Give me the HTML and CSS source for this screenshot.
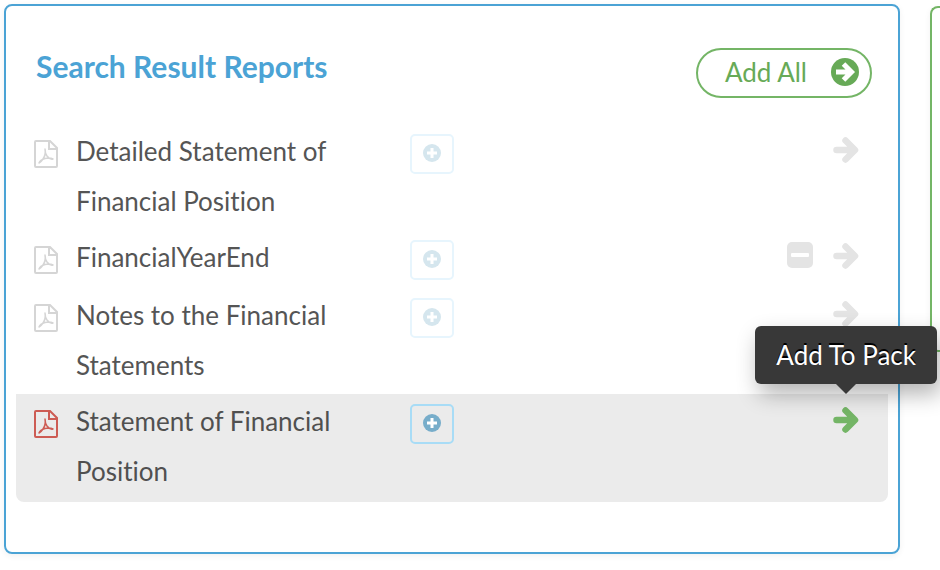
FILE: index.html
```html
<!DOCTYPE html>
<html lang="en">
<head>
    <meta charset="UTF-8">
    <meta name="viewport" content="width=device-width, initial-scale=1.0">
    <title>Search Result Reports</title>
    <link rel="stylesheet" href="styles.css">
</head>
<body>
    <svg class="sprite" aria-hidden="true">
        <symbol id="pdf" viewBox="0 0 24 28">
            <path d="M2 1H16L23 8V26Q23 27 22 27H2Q1 27 1 26V2Q1 1 2 1Z M15 1V9H23" fill="none" stroke="currentColor" stroke-width="2"/>
            <path d="M11 9Q12 15 9 19Q7 22 5 23Q6 20 11 18.500Q16 17.500 19 19Q16 20 13 16Q11 13 11 9Z" fill="none" stroke="currentColor" stroke-width="1.500" stroke-linejoin="round"/>
        </symbol>
        <symbol id="plus" viewBox="0 0 18 18">
            <circle cx="9" cy="9" r="9" fill="currentColor"/>
            <path class="hole" d="M9 4V14M4 9H14" stroke-width="3"/>
        </symbol>
        <symbol id="arrow" viewBox="0 0 26 28">
            <path d="M3.500 14H21M12.500 4.500L22 14L12.500 23.500" fill="none" stroke="currentColor" stroke-width="6.500" stroke-linecap="round" stroke-linejoin="round"/>
        </symbol>
        <symbol id="minus" viewBox="0 0 26 26">
            <rect width="26" height="26" rx="5" fill="currentColor"/>
            <rect x="4" y="11" width="18" height="4" rx="1" fill="#fff"/>
        </symbol>
        <symbol id="circle-arrow" viewBox="0 0 28 28">
            <circle cx="14" cy="14" r="14" fill="currentColor"/>
            <path d="M5 14H20M12.500 6L20.500 14L12.500 22" fill="none" stroke="#fff" stroke-width="5"/>
        </symbol>
    </svg>

    <main class="columns">
        <section class="panel results">
            <header class="panel-header">
                <h2>Search Result Reports</h2>
                <button class="add-all" type="button">Add All <svg class="icon-circle"><use href="#circle-arrow"/></svg></button>
            </header>
            <ul class="reports">
                <li class="report">
                    <svg class="icon-pdf"><use href="#pdf"/></svg>
                    <span class="name">Detailed Statement of Financial Position</span>
                    <button class="more" type="button" aria-label="Details"><svg class="icon-plus"><use href="#plus"/></svg></button>
                    <div class="actions">
                        <button class="action" type="button" aria-label="Add To Pack"><svg class="icon-arrow"><use href="#arrow"/></svg></button>
                    </div>
                </li>
                <li class="report">
                    <svg class="icon-pdf"><use href="#pdf"/></svg>
                    <span class="name">FinancialYearEnd</span>
                    <button class="more" type="button" aria-label="Details"><svg class="icon-plus"><use href="#plus"/></svg></button>
                    <div class="actions">
                        <button class="action" type="button" aria-label="Remove"><svg class="icon-minus"><use href="#minus"/></svg></button>
                        <button class="action" type="button" aria-label="Add To Pack"><svg class="icon-arrow"><use href="#arrow"/></svg></button>
                    </div>
                </li>
                <li class="report">
                    <svg class="icon-pdf"><use href="#pdf"/></svg>
                    <span class="name">Notes to the Financial Statements</span>
                    <button class="more" type="button" aria-label="Details"><svg class="icon-plus"><use href="#plus"/></svg></button>
                    <div class="actions">
                        <button class="action" type="button" aria-label="Add To Pack"><svg class="icon-arrow"><use href="#arrow"/></svg></button>
                    </div>
                </li>
                <li class="report active">
                    <svg class="icon-pdf"><use href="#pdf"/></svg>
                    <span class="name">Statement of Financial Position</span>
                    <button class="more" type="button" aria-label="Details"><svg class="icon-plus"><use href="#plus"/></svg></button>
                    <div class="actions">
                        <button class="action" type="button" aria-labelledby="tip"><svg class="icon-arrow"><use href="#arrow"/></svg></button>
                        <span class="tooltip" id="tip" role="tooltip">Add To Pack</span>
                    </div>
                </li>
            </ul>
        </section>
        <section class="panel pack" aria-label="Pack"></section>
    </main>
</body>
</html>
```
FILE: styles.css
```css
* {
    box-sizing: border-box;
}
body {
    margin: 0;
    background-color: #fff;
    color: #555;
    font-family: Lato, "Open Sans", sans-serif;
    font-size: 26px;
    font-variant-ligatures: none;
}
button {
    padding: 0;
    border: 0;
    background: none;
    color: inherit;
    font: inherit;
    cursor: pointer;
}
svg {
    display: block;
}
.sprite {
    position: absolute;
    width: 0;
    height: 0;
}
.columns {
    display: grid;
    grid-template-columns: 1fr 10px;
    align-items: start;
    gap: 30px;
    padding: 4px 0 16px 4px;
}
.panel {
    border: 2px solid #4ba3d5;
    border-radius: 8px;
    box-shadow: 0 2px 6px rgba(0, 0, 0, 0.06);
}
.results {
    padding: 42px 10px 50px;
}
.pack {
    height: 346px;
    margin-top: 2px;
    border-color: #74b566;
    border-right: 0;
    border-radius: 8px 0 0 8px;
}
.panel-header {
    display: flex;
    align-items: flex-start;
    justify-content: space-between;
    padding: 0 16px 0 20px;
}
h2 {
    margin: 0;
    color: #4ba3d5;
    font-size: 30px;
    line-height: 36px;
}
.add-all {
    display: flex;
    align-items: center;
    gap: 24px;
    height: 50px;
    padding: 0 11px 2px 27px;
    border: 2px solid #74b566;
    border-radius: 25px;
    color: #67aa57;
}
.icon-circle {
    width: 28px;
    height: 28px;
}
.reports {
    margin: 26px 0 0;
    padding: 0;
    list-style: none;
}
.report {
    display: grid;
    grid-template-columns: 24px 300px 44px 1fr;
    align-items: start;
    min-height: 58px;
    padding: 2px 29px 4px 18px;
}
.icon-pdf {
    width: 24px;
    height: 28px;
    margin-top: 14px;
    color: #d5d5d5;
}
.name {
    padding: 0 20px 0 18px;
    line-height: 50px;
}
.more {
    display: grid;
    place-items: center;
    width: 44px;
    height: 40px;
    margin-top: 8px;
    margin-left: 52px;
    padding-bottom: 2px;
    border: 2px solid #e7f5fd;
    border-radius: 5px;
    color: #d5e6ee;
}
.icon-plus {
    width: 18px;
    height: 18px;
}
.hole {
    stroke: #fff;
}
.actions {
    position: relative;
    display: flex;
    align-items: flex-start;
    justify-content: flex-end;
    gap: 20px;
    margin-top: 10px;
    color: #e4e4e4;
}
.icon-arrow {
    width: 26px;
    height: 28px;
}
.icon-minus {
    width: 26px;
    height: 26px;
}
.active {
    padding-bottom: 6px;
    border-radius: 0 0 8px 8px;
    background-color: #ebebeb;
}
.active .icon-pdf {
    color: #cd5c54;
}
.active .name {
    color: #505050;
}
.active .more {
    border-color: #a8dcf6;
    color: #77adca;
}
.active .action {
    color: #74b566;
}
.tooltip {
    position: absolute;
    right: -78px;
    bottom: 100%;
    margin-bottom: 22px;
    padding: 0 21px;
    border-radius: 6px;
    background-color: #383838;
    box-shadow: 4px 10px 22px rgba(0, 0, 0, 0.3);
    color: #fff;
    line-height: 58px;
    text-shadow: 0 -2px 0 #000;
    white-space: nowrap;
}
.tooltip::after {
    content: "";
    position: absolute;
    top: 100%;
    left: 50%;
    margin-left: -10px;
    border: 10px solid transparent;
    border-top-color: #383838;
    border-bottom: 0;
}
```
